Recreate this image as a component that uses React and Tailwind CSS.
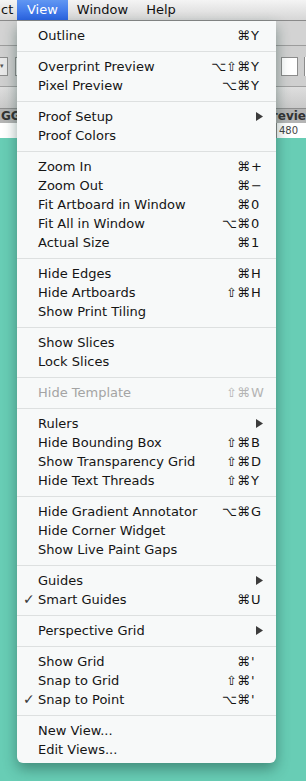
import React from 'react';

// View menu groups; mod = modifier glyphs, k = key, sub = has submenu
const groups = [
  [{ label: 'Outline', mod: '⌘', k: 'Y' }],
  [
    { label: 'Overprint Preview', mod: '⌥⇧⌘', k: 'Y' },
    { label: 'Pixel Preview', mod: '⌥⌘', k: 'Y' },
  ],
  [
    { label: 'Proof Setup', sub: true },
    { label: 'Proof Colors' },
  ],
  [
    { label: 'Zoom In', mod: '⌘', k: '+' },
    { label: 'Zoom Out', mod: '⌘', k: '−' },
    { label: 'Fit Artboard in Window', mod: '⌘', k: '0' },
    { label: 'Fit All in Window', mod: '⌥⌘', k: '0' },
    { label: 'Actual Size', mod: '⌘', k: '1' },
  ],
  [
    { label: 'Hide Edges', mod: '⌘', k: 'H' },
    { label: 'Hide Artboards', mod: '⇧⌘', k: 'H' },
    { label: 'Show Print Tiling' },
  ],
  [
    { label: 'Show Slices' },
    { label: 'Lock Slices' },
  ],
  [{ label: 'Hide Template', mod: '⇧⌘', k: 'W', disabled: true }],
  [
    { label: 'Rulers', sub: true },
    { label: 'Hide Bounding Box', mod: '⇧⌘', k: 'B' },
    { label: 'Show Transparency Grid', mod: '⇧⌘', k: 'D' },
    { label: 'Hide Text Threads', mod: '⇧⌘', k: 'Y' },
  ],
  [
    { label: 'Hide Gradient Annotator', mod: '⌥⌘', k: 'G' },
    { label: 'Hide Corner Widget' },
    { label: 'Show Live Paint Gaps' },
  ],
  [
    { label: 'Guides', sub: true },
    { label: 'Smart Guides', mod: '⌘', k: 'U', checked: true },
  ],
  [{ label: 'Perspective Grid', sub: true }],
  [
    { label: 'Show Grid', mod: '⌘', k: "'" },
    { label: 'Snap to Grid', mod: '⇧⌘', k: "'" },
    { label: 'Snap to Point', mod: '⌥⌘', k: "'", checked: true },
  ],
  [
    { label: 'New View...' },
    { label: 'Edit Views...' },
  ],
];

function MenuRow({ item }) {
  const color = item.disabled ? 'text-[#a4a4a4]' : 'text-[#151515]';
  return (
    <div className={`relative flex h-[19px] items-center pl-[21px] pr-[13px] leading-[19px] ${color}`}>
      {item.checked && (
        <span className="absolute left-[6px] top-0 text-[14px] text-[#3a3a3a]">✓</span>
      )}
      <span className="flex-1 whitespace-nowrap">{item.label}</span>
      {item.mod && (
        <span className={`flex whitespace-nowrap ${item.disabled ? 'text-[#b4b4b4]' : ''}`}>
          <span className="text-right">{item.mod}</span>
          <span className="w-[13px] pl-[1px] text-left">{item.k}</span>
        </span>
      )}
      {item.sub && (
        <span className="flex w-[13px] justify-end">
          <svg width="7" height="9" viewBox="0 0 7 9">
            <path d="M0 0 L7 4.5 L0 9 Z" fill="#3c3c3c" />
          </svg>
        </span>
      )}
    </div>
  );
}

export default function App() {
  return (
    <div
      className="relative flex h-[781px] w-[306px] flex-col overflow-hidden bg-[#68cdb5] text-[13px]"
      style={{ fontFamily: '"DejaVu Sans", "Liberation Sans", sans-serif' }}
    >
      {/* menu bar */}
      <div className="flex h-[21px] items-center border-b border-[#8a8a8a] bg-gradient-to-b from-[#f4f4f4] to-[#d6d6d6] text-[#111]">
        <span className="w-[17px] pl-[1px]">ct</span>
        <span className="flex h-full items-center bg-gradient-to-b from-[#6197f2] to-[#2b63e3] px-[10px] text-white">
          View
        </span>
        <span className="px-[9px]">Window</span>
        <span className="px-[9px]">Help</span>
      </div>

      {/* app toolbar behind the menu */}
      <div className="h-[25px] border-b border-[#9c9c9c] bg-[#d3d3d3]" />
      <div className="flex h-[41px] items-center justify-between border-b border-[#a0a0a0] bg-[#cfcfcf]">
        <div className="flex items-center gap-[7px]">
          <div className="flex h-[19px] w-[8px] items-center border border-l-0 border-[#8c8c8c] bg-[#e8e8e8] text-[7px] text-[#555]">▾</div>
          <div className="h-[19px] w-[4px] border border-r-0 border-[#8c8c8c] bg-[#f4f4f4]" />
        </div>
        <div className="flex items-center gap-[6px]">
          <span className="text-[#333]">:</span>
          <div className="h-[19px] w-[17px] border border-[#8c8c8c] bg-white" />
          <div className="h-[19px] w-[2px] border-l border-[#8c8c8c] bg-white" />
        </div>
      </div>
      <div className="h-[22px] border-b border-[#8e8e8e] bg-gradient-to-b from-[#dedede] to-[#c9c9c9]" />
      <div className="flex h-[14px] items-center justify-between bg-[#b4b4b4] text-[12px] font-bold text-[#333]">
        <span className="pl-[1px]">GG</span>
        <span>Previe</span>
      </div>
      <div className="flex h-[15px] items-center justify-end bg-white text-[10px] text-[#444]">
        <span className="w-[30px] border-l border-[#888] pl-[2px] leading-[15px]">480</span>
      </div>
      <div className="flex-1 bg-[#68cdb5]" />

      {/* dropdown menu */}
      <div className="absolute left-[17px] top-[21px] w-[259px] rounded-b-[6px] bg-[#f7f9f9] pb-[4px] pt-[5px] shadow-[0_6px_14px_rgba(20,60,50,0.45)]">
        {groups.map((g, gi) => (
          <div key={gi}>
            {gi > 0 && (
              <div className="flex h-[12px] items-center">
                <div className="h-px w-full bg-[#dde0e0]" />
              </div>
            )}
            {g.map((item) => (
              <MenuRow key={item.label} item={item} />
            ))}
          </div>
        ))}
      </div>
    </div>
  );
}
